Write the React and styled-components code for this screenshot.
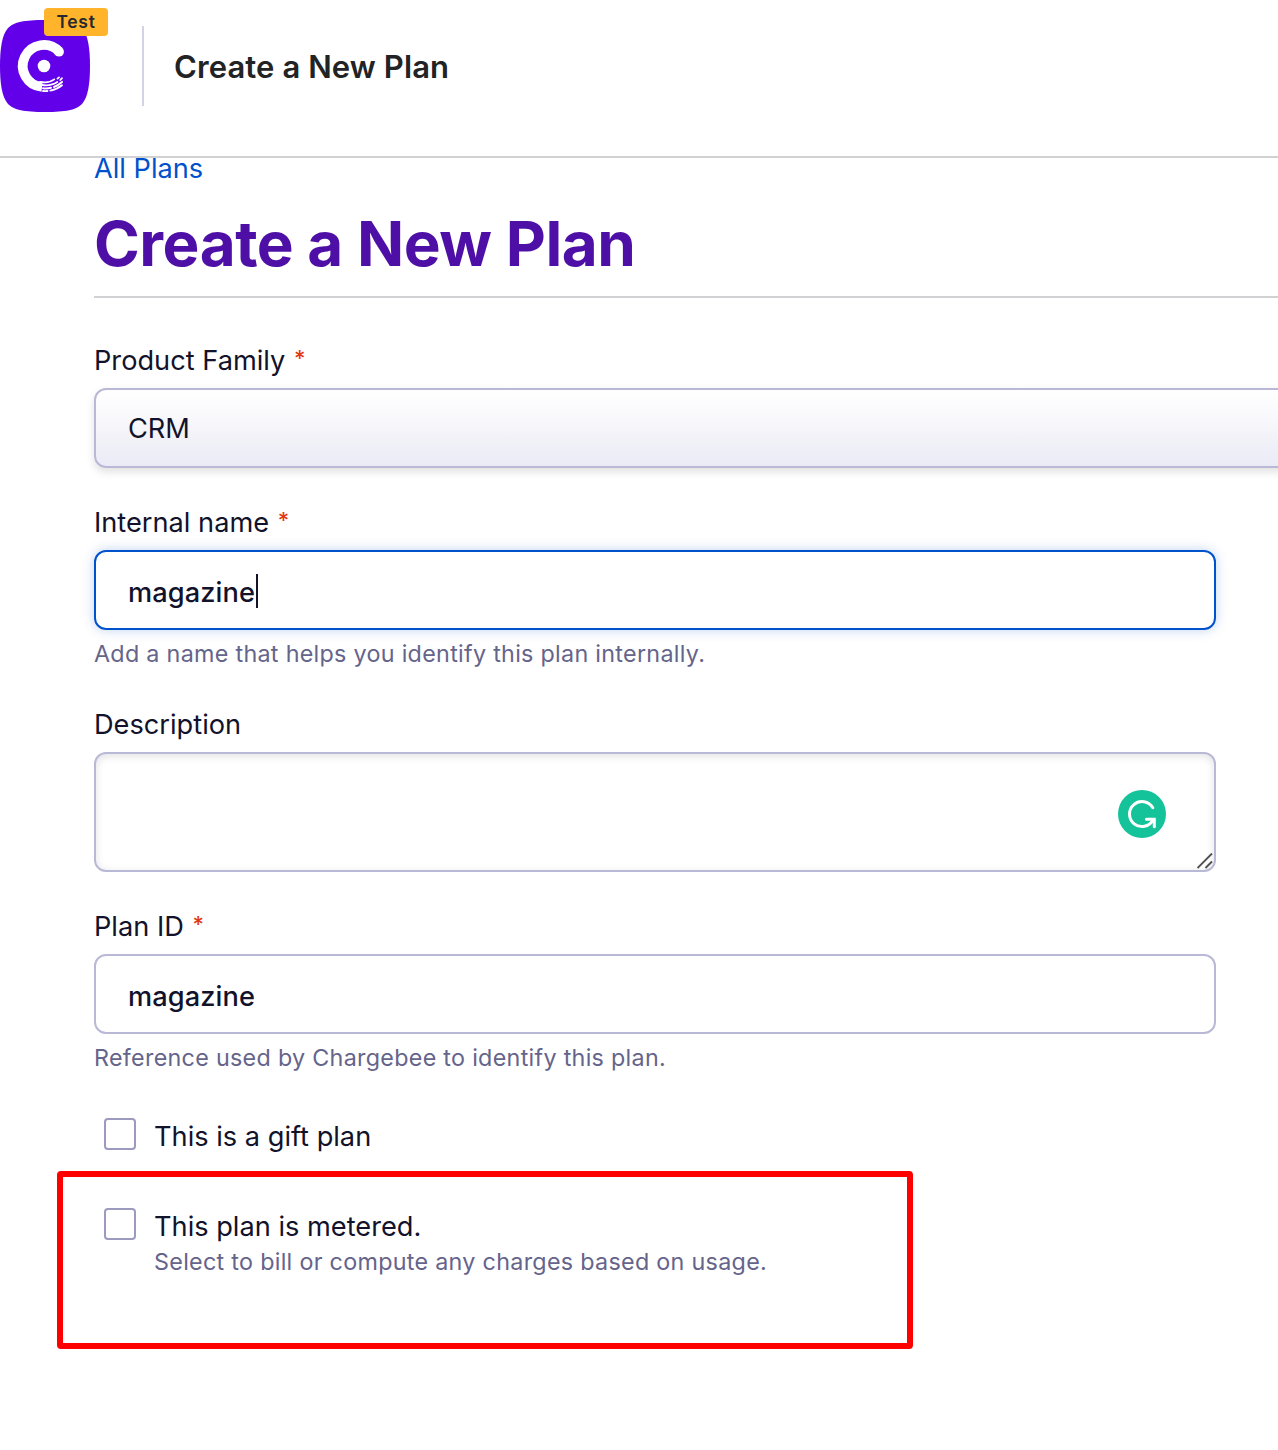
import styled, { createGlobalStyle, css } from "styled-components";

const GlobalStyle = createGlobalStyle`
  * {
    box-sizing: border-box;
  }
  body {
    margin: 0;
    background: #fff;
    color: #12122b;
    font-family: Inter, "Liberation Sans", sans-serif;
    font-size: 27.2px;
    overflow: hidden;
  }
`;

const Page = styled.div`
  width: 100%;
  height: 1450px;
  overflow: hidden;
`;

const Header = styled.header`
  display: flex;
  align-items: flex-start;
  height: 158px;
  border-bottom: 2px solid #d1d1d3;
`;

const Brand = styled.div`
  position: relative;
  width: 90px;
  height: 112px;
  padding-top: 20px;
  svg {
    display: block;
  }
`;

// sits on the top right corner of the logo
const EnvBadge = styled.span`
  position: absolute;
  top: 8px;
  left: 44px;
  width: 64px;
  height: 28px;
  border-radius: 4px;
  background: #ffb42c;
  color: #27292e;
  font-size: 17.5px;
  font-weight: 600;
  line-height: 28px;
  letter-spacing: 0.7px;
  text-align: center;
`;

const Divider = styled.div`
  width: 2px;
  height: 80px;
  margin: 26px 30px 0 52px;
  background: #d2d4e6;
`;

const HeaderTitle = styled.div`
  margin-top: 47px;
  color: #222325;
  font-size: 31px;
  font-weight: 600;
  line-height: 39px;
  letter-spacing: 0.1px;
`;

const Main = styled.main`
  padding-left: 94px;
`;

const BackLink = styled.a`
  display: block;
  margin-top: -10px;
  color: #0052cc;
  line-height: 41px;
`;

const Title = styled.h1`
  height: 110px;
  margin: -1px 0 42px;
  padding-top: 18px;
  border-bottom: 2px solid #d1d1d3;
  color: #4e0fa6;
  font-size: 62px;
  font-weight: 700;
  line-height: 75px;
  letter-spacing: -0.5px;
`;

const Field = styled.div`
  height: ${(props) => props.$height}px;
`;

const Label = styled.div`
  height: 48px;
  line-height: 41px;
`;

const Required = styled.span`
  margin-left: 1px;
  color: #e13913;
  font-size: 22px;
  font-weight: 500;
  line-height: 0;
  vertical-align: 4px;
`;

const control = css`
  display: flex;
  align-items: center;
  height: 80px;
  padding: 0 32px;
  border: 2px solid #b9b8d6;
  border-radius: 12px;
  line-height: 33px;
`;

const Select = styled.div`
  ${control}
  width: 1240px;
  padding-top: 1px;
  background: linear-gradient(#fff, #f8f8fc 40%, #f1f1f7 65%, #ebebf7);
  box-shadow: 0 4px 8px rgba(0, 0, 0, 0.12);
`;

const Input = styled.div`
  ${control}
  width: 1122px;
  padding-top: 5px;
  font-weight: 500;
  letter-spacing: 0.1px;
  ${(props) =>
    props.$focused &&
    css`
      border-color: #0052cc;
      box-shadow: 0 0 12px rgba(0, 82, 204, 0.25);
    `}
`;

const Caret = styled.i`
  width: 2px;
  height: 34px;
  margin: -3px 0 0 1px;
  background: #12122b;
`;

const TextArea = styled.div`
  ${control}
  position: relative;
  width: 1122px;
  height: 120px;
  padding: 4px 48px 0;
  justify-content: flex-end;
  box-shadow: inset 0 2px 8px rgba(0, 0, 0, 0.12);
`;

const ResizeHandle = styled.svg`
  position: absolute;
  right: 1px;
  bottom: 1px;
`;

const Hint = styled.div`
  margin-top: ${(props) => props.$top}px;
  color: #65648b;
  font-size: 23.3px;
  line-height: 31px;
  letter-spacing: 0.3px;
`;

const Option = styled.label`
  display: flex;
  align-items: flex-start;
  gap: 18px;
  height: 90px;
  padding-left: 10px;
`;

const Checkbox = styled.span`
  width: 32px;
  height: 32px;
  border: 2px solid #9c9abf;
  border-radius: 4px;
`;

const OptionText = styled.div`
  line-height: 37px;
`;

// red frame drawn over the metered option
const Highlight = styled.div`
  position: absolute;
  top: 1171px;
  left: 57px;
  width: 856px;
  height: 178px;
  border: 6px solid #ff0000;
  border-radius: 4px;
  pointer-events: none;
`;

function Logo() {
  return (
    <svg width="90" height="92" viewBox="0 0 90 92">
      <path
        d="M45 0C66 0 76 2 82 8C88 15 90 28 90 46C90 64 88 77 82 84C76 90 66 92 45 92C24 92 14 90 8 84C2 77 0 64 0 46C0 28 2 15 8 8C14 2 24 0 45 0Z"
        fill="#6200ea"
      />
      <circle cx="59" cy="31.7" r="4.9" fill="#fff" />
      <path
        d="M59 31.5A21 21 0 1 0 42 66.9"
        fill="none"
        stroke="#fff"
        strokeWidth="9.8"
      />
      <circle cx="44" cy="46" r="6.3" fill="#fff" />
      <g fill="none" stroke="#fff" strokeWidth="1.8" strokeLinecap="round">
        <path d="M40 61.8Q49 63.5 54.3 59.4M57.5 58.6L59 57.4" />
        <path d="M42 65Q51 66.3 57.3 62M60.3 60L62 58.2" />
        <path d="M43 68.2Q47 68.8 51 67.8M54 67Q58 65.5 62 61.9" strokeWidth="2" />
        <path d="M43 71Q45.5 71.3 47.5 71M50.3 70.6Q57 69.3 62 65.2" />
      </g>
    </svg>
  );
}

function WritingBadge() {
  return (
    <svg width="48" height="48" viewBox="0 0 48 48">
      <circle cx="24" cy="24" r="24" fill="#15c39a" />
      <g fill="none" stroke="#fff" strokeWidth="3" strokeLinecap="round">
        <path d="M34.8 17.8A12.5 12.5 0 1 0 35 30" />
        <path d="M28.4 29.2H36.3V36.8" />
      </g>
    </svg>
  );
}

function App() {
  return (
    <Page>
      <GlobalStyle />
      <Header>
        <Brand>
          <Logo />
          <EnvBadge>Test</EnvBadge>
        </Brand>
        <Divider />
        <HeaderTitle>Create a New Plan</HeaderTitle>
      </Header>
      <Main>
        <BackLink>All Plans</BackLink>
        <Title>Create a New Plan</Title>
        <Field $height={162}>
          <Label>
            Product Family <Required>*</Required>
          </Label>
          <Select>CRM</Select>
        </Field>
        <Field $height={202}>
          <Label>
            Internal name <Required>*</Required>
          </Label>
          <Input $focused>
            magazine
            <Caret />
          </Input>
          <Hint $top={8}>Add a name that helps you identify this plan internally.</Hint>
        </Field>
        <Field $height={202}>
          <Label>Description</Label>
          <TextArea>
            <WritingBadge />
            <ResizeHandle width="16" height="16" viewBox="0 0 16 16">
              <path
                d="M0.5 15L15 0.5M8.5 15L15 8.5"
                stroke="#505050"
                strokeWidth="1.9"
              />
            </ResizeHandle>
          </TextArea>
        </Field>
        <Field $height={212}>
          <Label>
            Plan ID <Required>*</Required>
          </Label>
          <Input>magazine</Input>
          <Hint $top={8}>Reference used by Chargebee to identify this plan.</Hint>
        </Field>
        <Option>
          <Checkbox />
          <OptionText>This is a gift plan</OptionText>
        </Option>
        <Option>
          <Checkbox />
          <OptionText>
            This plan is metered.
            <Hint $top={1}>Select to bill or compute any charges based on usage.</Hint>
          </OptionText>
        </Option>
      </Main>
      <Highlight />
    </Page>
  );
}

export default App;
